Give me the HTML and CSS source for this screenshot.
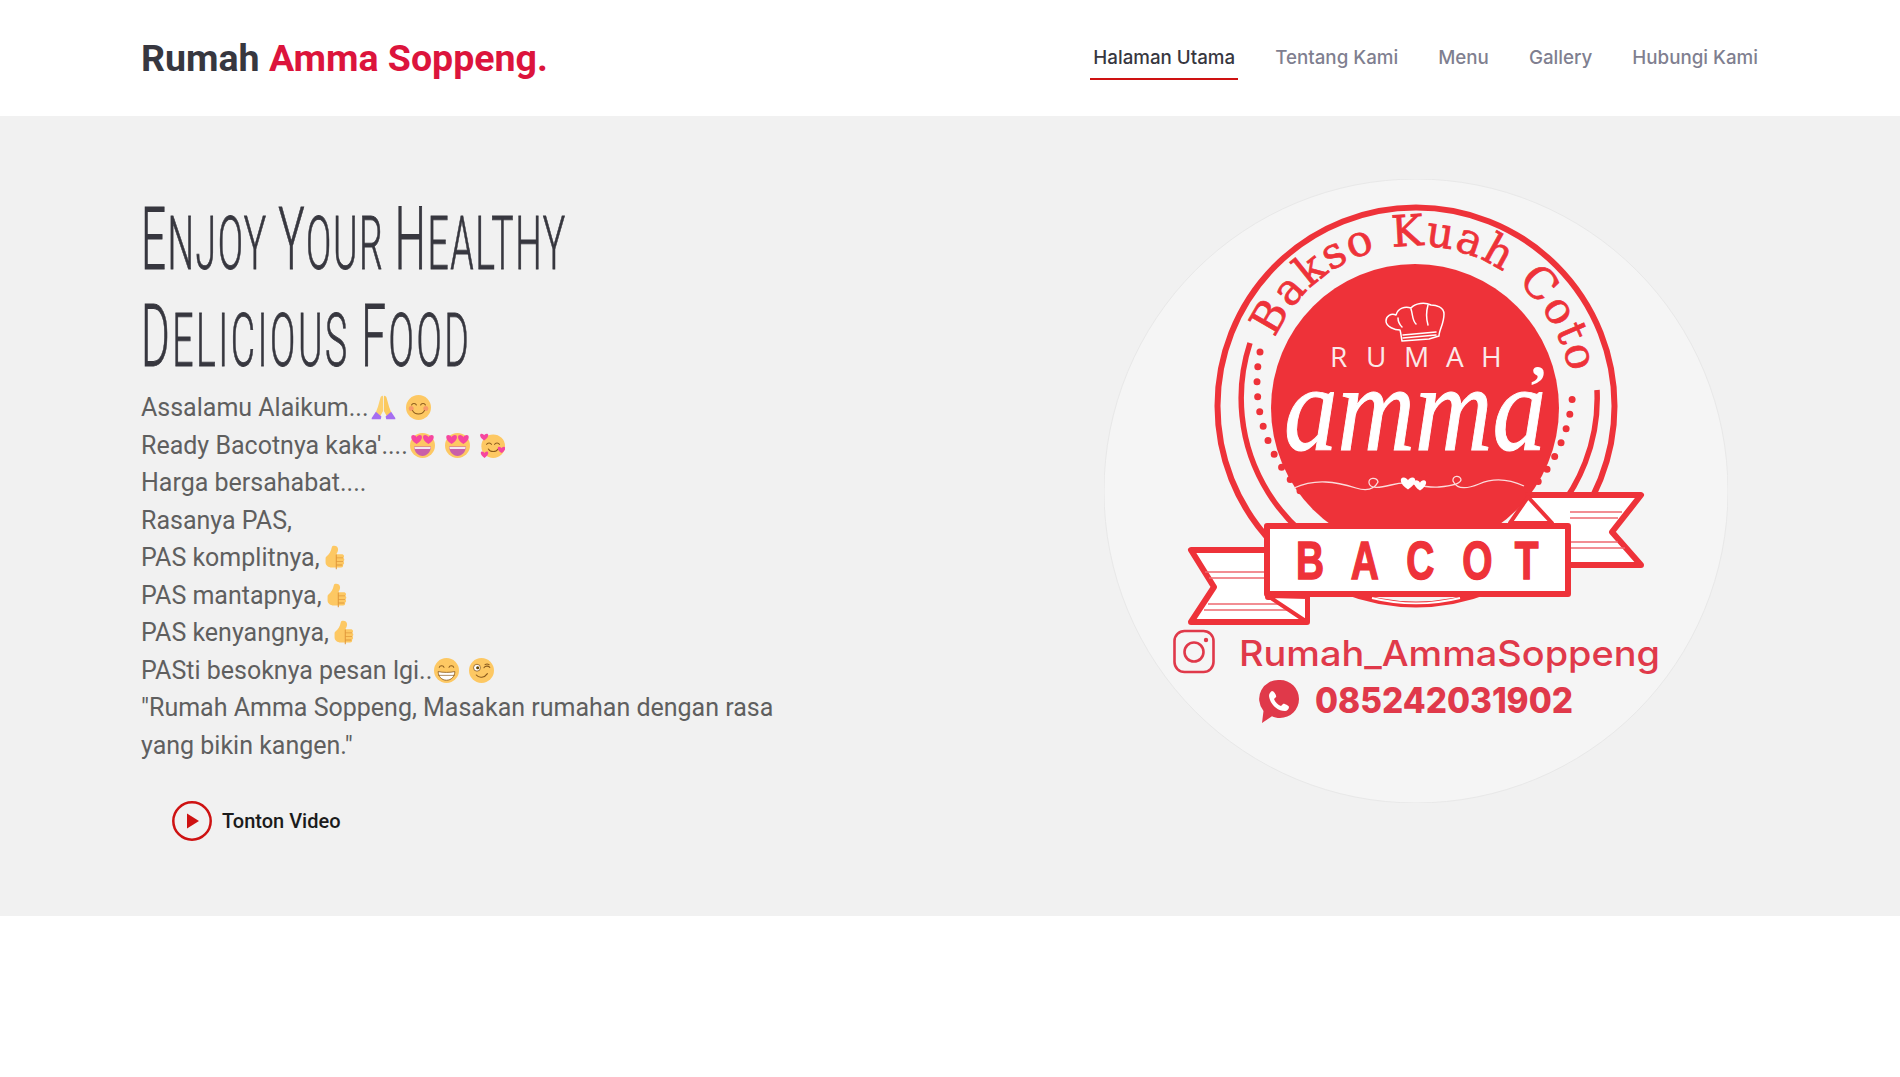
FILE: index.html
```html
<!DOCTYPE html>
<html>
<head>
    <title>Rumah Amma Soppeng</title>
    <meta name="viewport" content="width=device-width, initial-scale=1">
    <link rel="stylesheet" href="styles.css">
</head>
<body>
    <!-- emoji -->
    <svg class="sprite" xmlns="http://www.w3.org/2000/svg">
        <defs>
            <path id="hrt" d="M0 4.600C-6.400 .4-6 -4-3.200 -4-1.600 -4-.5 -3 0 -1.900.5 -3 1.600 -4 3.200 -4 6 -4 6.400 .4 0 4.600Z"/>
            <path id="arc-eye" d="M-3.400 1.400C-2.600 -1.400 2.600 -1.400 3.400 1.400" fill="none" stroke="#8a5a1c" stroke-width="1.500" stroke-linecap="round"/>
        </defs>
        <symbol id="e-pray" viewBox="0 0 36 36">
            <path d="M16.600 1c-1.600 0-2.600 1.400-3 3L10 17l-3 8 6 6 4.400-8V3c0-1-.3-2-.8-2z" fill="#fcd06f"/>
            <path d="M19.400 1c1.600 0 2.600 1.400 3 3L26 17l3 8-6 6-4.400-8V3c0-1 .3-2 .8-2z" fill="#fbc95e"/>
            <path d="M1 33l6-9 8 7-1 4H1zM35 33l-6-9-8 7 1 4h13z" fill="#a66ef0"/>
        </symbol>
        <symbol id="e-smile" viewBox="0 0 36 36">
            <circle cx="18" cy="18" r="18" fill="#fdc863"/>
            <circle cx="7.500" cy="19.500" r="3.600" fill="#f79a6a"/><circle cx="28.500" cy="19.500" r="3.600" fill="#f79a6a"/>
            <use href="#arc-eye" x="11.500" y="13"/><use href="#arc-eye" x="24.500" y="13"/>
            <path d="M9.500 22.500c3 6.500 14 6.500 17 0" fill="none" stroke="#8a5a1c" stroke-width="1.600" stroke-linecap="round"/>
        </symbol>
        <symbol id="e-love" viewBox="0 0 36 36">
            <circle cx="18" cy="18" r="18" fill="#fdc863"/>
            <path d="M6 19.500h24c0 8-5.500 13.500-12 13.500S6 27.500 6 19.500z" fill="#c95fa8"/>
            <path d="M6.400 20h23.200l-.6 3H7z" fill="#f3e6ee"/>
            <use href="#hrt" transform="translate(9.500 9) scale(1.500)" fill="#f6469f"/>
            <use href="#hrt" transform="translate(26.500 9) scale(1.500)" fill="#f6469f"/>
        </symbol>
        <symbol id="e-hearts" viewBox="0 0 36 36">
            <circle cx="19" cy="19" r="17" fill="#fdc863"/>
            <use href="#arc-eye" x="13" y="15"/><use href="#arc-eye" x="24.500" y="15"/>
            <path d="M12 23c3 5 11 5 14 0" fill="none" stroke="#8a5a1c" stroke-width="1.500" stroke-linecap="round"/>
            <use href="#hrt" transform="translate(6 5.500) scale(1.150)" fill="#f6469f"/>
            <use href="#hrt" transform="translate(6.500 31) scale(1.050)" fill="#f6469f"/>
            <use href="#hrt" transform="translate(31 24) scale(1.050)" fill="#f6469f"/>
        </symbol>
        <symbol id="e-thumb" viewBox="4 1 28 35" preserveAspectRatio="none">
            <path d="M9 17c3-3 5-7 6-13 .4-3 7-3 7 3 0 3-1 5-2 7h6c3 0 3.500 4 1.500 5 2 1 2 4 .3 5 1.500 1 1.200 4-.5 4.500 1 1.500.2 4-2 4H15c-4 0-7-3-7-7v-6c0-1 .3-2 1-2.500z" fill="#fdc863"/>
            <path d="M20 14.500V34.500M20 19h7.500M20 24h7.500M20 29h6.500" fill="none" stroke="#e29a3c" stroke-width="1.200" stroke-linecap="round"/>
        </symbol>
        <symbol id="e-grin" viewBox="0 0 36 36">
            <circle cx="18" cy="18" r="18" fill="#fdc863"/>
            <use href="#arc-eye" x="11" y="12"/><use href="#arc-eye" x="25" y="12"/>
            <path d="M6 19.500c6 1.600 18 1.600 24 0 0 7-5 12.500-12 12.500S6 26.500 6 19.500z" fill="#fff" stroke="#8a5a1c" stroke-width="1.200"/>
            <path d="M6.500 25h23" stroke="#8a5a1c" stroke-width="1"/>
        </symbol>
        <symbol id="e-wink" viewBox="0 0 36 36">
            <circle cx="18" cy="18" r="18" fill="#fdc863"/>
            <circle cx="11.500" cy="14" r="5" fill="#fff" stroke="#8a5a1c" stroke-width="1.200"/>
            <circle cx="12.500" cy="14" r="2.200" fill="#664500"/>
            <path d="M21.500 14c2-3 6.500-3 8.500-.5M23 9.500c2-1 4-1 6 0" fill="none" stroke="#8a5a1c" stroke-width="1.500" stroke-linecap="round"/>
            <path d="M10.500 24.500c4 5 12 4 16-2" fill="none" stroke="#8a5a1c" stroke-width="1.600" stroke-linecap="round"/>
        </symbol>
    </svg>

    <header class="topbar">
        <a class="brand" href="#">Rumah <span>Amma Soppeng.</span></a>
        <nav class="nav">
            <a class="active" href="#">Halaman Utama</a>
            <a href="#">Tentang Kami</a>
            <a href="#">Menu</a>
            <a href="#">Gallery</a>
            <a href="#">Hubungi Kami</a>
        </nav>
    </header>

    <section class="hero">
        <div class="hero-text">
            <h1>
                <span class="line"><b>E</b>NJOY <b>Y</b>OUR <b>H</b>EALTHY</span>
                <span class="line wide"><b>D</b>ELICIOUS <b>F</b>OOD</span>
            </h1>
            <p>
                Assalamu Alaikum...<svg class="emo"><use href="#e-pray"/></svg> <svg class="emo"><use href="#e-smile"/></svg><br>
                Ready Bacotnya kaka'....<svg class="emo"><use href="#e-love"/></svg> <svg class="emo"><use href="#e-love"/></svg> <svg class="emo"><use href="#e-hearts"/></svg><br>
                Harga bersahabat....<br>
                Rasanya PAS,<br>
                PAS komplitnya,<svg class="emo"><use href="#e-thumb"/></svg><br>
                PAS mantapnya,<svg class="emo"><use href="#e-thumb"/></svg><br>
                PAS kenyangnya,<svg class="emo"><use href="#e-thumb"/></svg><br>
                PASti besoknya pesan lgi..<svg class="emo"><use href="#e-grin"/></svg> <svg class="emo"><use href="#e-wink"/></svg><br>
                "Rumah Amma Soppeng, Masakan rumahan dengan rasa yang bikin kangen."
            </p>
            <a class="watch" href="#">
                <svg class="play" viewBox="0 0 40 40">
                    <circle cx="20" cy="20" r="18.700" fill="none" stroke="#ce1212" stroke-width="2.500"/>
                    <path d="M15 12.500L27 20 15 27.500z" fill="#ce1212"/>
                </svg>
                Tonton Video
            </a>
        </div>

        <!-- logo, viewBox is in page pixels -->
        <svg class="badge" viewBox="1104 179 624 624" xmlns="http://www.w3.org/2000/svg">
            <defs>
                <path id="arc-top" d="M1275 338A155 155 0 0 1 1571 385"/>
            </defs>
            <circle cx="1416" cy="491" r="312" fill="#f5f5f5" stroke="#e8e8e8" stroke-width="1"/>

            <circle cx="1416" cy="406" r="198.500" fill="none" stroke="#ee3239" stroke-width="6"/>
            <path d="M1250 343A178 178 0 1 0 1597 390" fill="none" stroke="#ee3239" stroke-width="5.500"/>
            <path d="M1260 352A158 158 0 1 0 1573 385" fill="none" stroke="#ee3239" stroke-width="7" stroke-linecap="round" stroke-dasharray="0 15"/>
            <circle cx="1415" cy="408" r="144" fill="#ee3239"/>

            <text class="b-arc"><textPath href="#arc-top">Bakso Kuah Coto</textPath></text>

            <!-- chef hat -->
            <g fill="none" stroke="#fff" stroke-width="1.500" stroke-linejoin="round" stroke-linecap="round">
                <path d="M1402 341c-1-5-1-8-2-11-5 0-14-3-14-9 0-5 5-8 10-6 2-7 9-9 15-7 4-5 14-6 20-3 5 0 13 2 13 9 0 10-5 16-5 22l-10 3z"/>
                <path d="M1403 335l33-3M1403 338l33-3M1411 309c2 6 1 11 5 15M1428 305c-2 7-2 13 0 20M1398 318c0 4 2 7 4 9"/>
            </g>
            <text class="b-rumah" x="1330 1366 1404 1446 1481" y="367">RUMAH</text>
            <text class="b-amma" x="1284" y="450" textLength="262" lengthAdjust="spacingAndGlyphs">amma</text>
            <text class="b-apos" x="1528" y="406">’</text>

            <path d="M1294 488c22-10 42-6 62 0 10 3 18 2 22-6-1-5-10-5-9 1 1 6 10 5 22 2 8-2 16-3 23-1m0 0c8 2 16 4 25 3 12-1 21-3 22-7 0-5-9-5-8 1 4 9 14 8 26 3 16-7 32-4 45 2" fill="none" stroke="#fbdcdc" stroke-width="1.300"/>
            <use href="#hrt" transform="translate(1408 483) scale(1.400)" fill="#fff"/>
            <use href="#hrt" transform="translate(1420 485) scale(1.200)" fill="#fff"/>

            <!-- ribbons -->
            <path d="M1191 550H1268V597L1307 597V622H1191L1214 587z" fill="#fff" stroke="#ee3239" stroke-width="6" stroke-linejoin="round"/>
            <path d="M1205 572H1268M1209 578H1268M1208 604H1300M1204 610H1300" stroke="#ee6a70" stroke-width="1.500"/>
            <path d="M1641 495H1528V565H1641L1612 532z" fill="#fff" stroke="#ee3239" stroke-width="6" stroke-linejoin="round"/>
            <path d="M1570 512H1622M1570 518H1618M1570 542H1618M1570 548H1625" stroke="#ee6a70" stroke-width="1.500"/>
            <path d="M1510 523L1528 497 1552 523z" fill="#fff" stroke="#ee3239" stroke-width="4" stroke-linejoin="round"/>
            <path d="M1268 596L1307 622V597z" fill="#fff" stroke="#ee3239" stroke-width="4" stroke-linejoin="round"/>
            <rect x="1267" y="526" width="301" height="68" fill="#fff" stroke="#ee3239" stroke-width="6" stroke-linejoin="round"/>
            <path d="M1372 598c28 7 60 7 88 0" fill="none" stroke="#fff" stroke-width="2"/>
            <g transform="scale(.72 1)">
                <text class="b-bacot" x="1800 1876 1953 2031 2104" y="579">BACOT</text>
            </g>

            <!-- contacts -->
            <rect x="1174.500" y="631" width="39" height="41" rx="10" fill="none" stroke="#e0394a" stroke-width="2.600"/>
            <circle cx="1194" cy="652" r="9.500" fill="none" stroke="#e0394a" stroke-width="2.600"/>
            <circle cx="1206" cy="640" r="2.200" fill="#e0394a"/>
            <text class="b-ig" x="1239" y="666" textLength="421" lengthAdjust="spacingAndGlyphs">Rumah_AmmaSoppeng</text>
            <path d="M1280 680a19 19 0 0 1 0 38c-3 0-6-.6-8-1.800l-10 6.800 1.500-12a19 19 0 0 1 16.500-31z" fill="#e0394a"/>
            <path d="M1272 691c-2 1-3 3-3 5 1 8 8 15 16 15 2 0 4-2 4-4 0-1-5-4-6-3l-2 2c-3-1-6-4-7-7l2-2c1-1-2-6-4-6z" fill="#fff"/>
            <text class="b-tel" x="1315" y="713" textLength="258" lengthAdjust="spacingAndGlyphs">085242031902</text>
        </svg>
    </section>
</body>
</html>
```

FILE: styles.css
```css
* {
    box-sizing: border-box;
}

body {
    margin: 0;
    background: #fff;
    font-family: Roboto, sans-serif;
    min-height: 1077px;
}

a {
    text-decoration: none;
}

.sprite {
    display: block;
    width: 0;
    height: 0;
    overflow: hidden;
}

.topbar {
    height: 116px;
    padding: 0 139px 0 141px;
    display: flex;
    align-items: center;
    justify-content: space-between;
}

.brand {
    font-size: 37.500px;
    font-weight: 700;
    color: #37373f;
}

.brand span {
    color: #dc143c;
}

.nav {
    display: flex;
    gap: 34px;
    font-family: Inter, sans-serif;
    font-size: 18.750px;
    font-weight: 500;
}

.nav a {
    color: #7f7f90;
    padding: 9px 3px;
    border-bottom: 2px solid transparent;
}

.nav a.active {
    color: #37373f;
    border-bottom-color: #ce1212;
}

.hero {
    height: 800px;
    background: #f1f1f1;
    padding: 79px 172px 0 141px;
    display: flex;
    justify-content: space-between;
    align-items: flex-start;
}

.hero-text {
    width: 650px;
}

h1 {
    margin: 0;
    color: #37373f;
    font-weight: 300;
    font-size: 74px;
    line-height: 97px;
    letter-spacing: 3px;
    white-space: nowrap;
    -webkit-text-stroke: 0.8px #37373f;
}

h1 .line {
    display: block;
    height: 97px;
    transform: scaleX(0.505);
    transform-origin: left center;
}

h1 .line.wide {
    letter-spacing: 5px;
}

h1 b {
    font-weight: 300;
    font-size: 87px;
    line-height: 0;
}

.hero-text p {
    margin: 0;
    color: #5f5f5f;
    font-size: 25px;
    line-height: 37.500px;
}

.emo {
    width: 25px;
    height: 25px;
    vertical-align: -4px;
    margin: 0 2px;
}

.watch {
    display: inline-flex;
    align-items: center;
    gap: 10px;
    margin: 37px 0 0 31px;
    color: #1b1b1b;
    font-size: 20px;
    font-weight: 500;
}

.play {
    width: 40px;
    height: 40px;
}

.badge {
    width: 624px;
    height: 624px;
    flex: none;
    display: block;
    margin-top: -16px;
}

.b-arc {
    font-family: "DejaVu Serif", serif;
    font-size: 43px;
    letter-spacing: 1.500px;
    fill: #ee3239;
    stroke: #ee3239;
    stroke-width: 0.7px;
}

.b-rumah {
    font-family: "Open Sans", sans-serif;
    font-size: 28px;
    fill: #fbe9e9;
}

.b-amma {
    font-family: "Liberation Serif", serif;
    font-style: italic;
    font-size: 122px;
    fill: #fff;
    stroke: #fff;
    stroke-width: 1px;
}

.b-apos {
    font-family: "Liberation Serif", serif;
    font-weight: 700;
    font-size: 60px;
    fill: #fff;
}

.b-bacot {
    font-family: "Liberation Sans", sans-serif;
    font-weight: 700;
    font-size: 54px;
    fill: #ee3239;
    stroke: #ee3239;
    stroke-width: 1.500px;
}

.b-ig {
    font-family: Inter, sans-serif;
    font-weight: 500;
    font-size: 35px;
    fill: #e0394a;
}

.b-tel {
    font-family: Inter, sans-serif;
    font-weight: 800;
    font-size: 35px;
    fill: #e0394a;
}
```
